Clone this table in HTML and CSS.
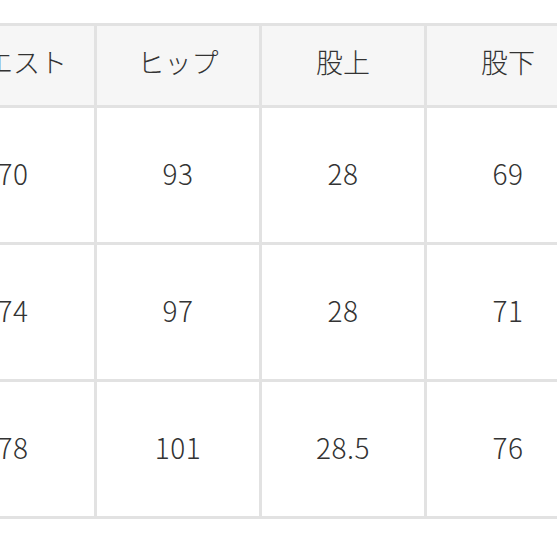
FILE: index.html
```html
<!DOCTYPE html>
<html lang="ja">
<head>
<meta charset="utf-8">
<link rel="stylesheet" href="styles.css">
</head>
<body>
<div class="size-table">
  <div class="cell head">ウエスト</div>
  <div class="cell head">ヒップ</div>
  <div class="cell head">股上</div>
  <div class="cell head">股下</div>
  <div class="cell">70</div>
  <div class="cell">93</div>
  <div class="cell">28</div>
  <div class="cell">69</div>
  <div class="cell">74</div>
  <div class="cell">97</div>
  <div class="cell">28</div>
  <div class="cell">71</div>
  <div class="cell">78</div>
  <div class="cell">101</div>
  <div class="cell">28.5</div>
  <div class="cell">76</div>
</div>
</body>
</html>
```
FILE: styles.css
```css
html, body {
  margin: 0;
  padding: 0;
  overflow: hidden;
  background: #ffffff;
  width: 557px;
  height: 557px;
}
.size-table {
  margin-top: 23px;
  margin-left: -71px;
  width: max-content;
  display: grid;
  grid-template-columns: repeat(4, 162px);
  grid-template-rows: 79px 134px 134px 134px;
  gap: 3px;
  padding: 3px;
  background: #e2e2e2;
  font-family: "Noto Sans CJK JP", "Noto Sans", sans-serif;
  font-weight: 300;
  color: #333333;
}
.cell {
  background: #ffffff;
  display: flex;
  align-items: center;
  justify-content: center;
  font-size: 28px;
  line-height: 1;
  padding-bottom: 5px;
  letter-spacing: 0.5px;
}
.cell.head {
  background: #f6f6f6;
  font-size: 27px;
  padding-bottom: 9px;
  letter-spacing: 0;
}
```
